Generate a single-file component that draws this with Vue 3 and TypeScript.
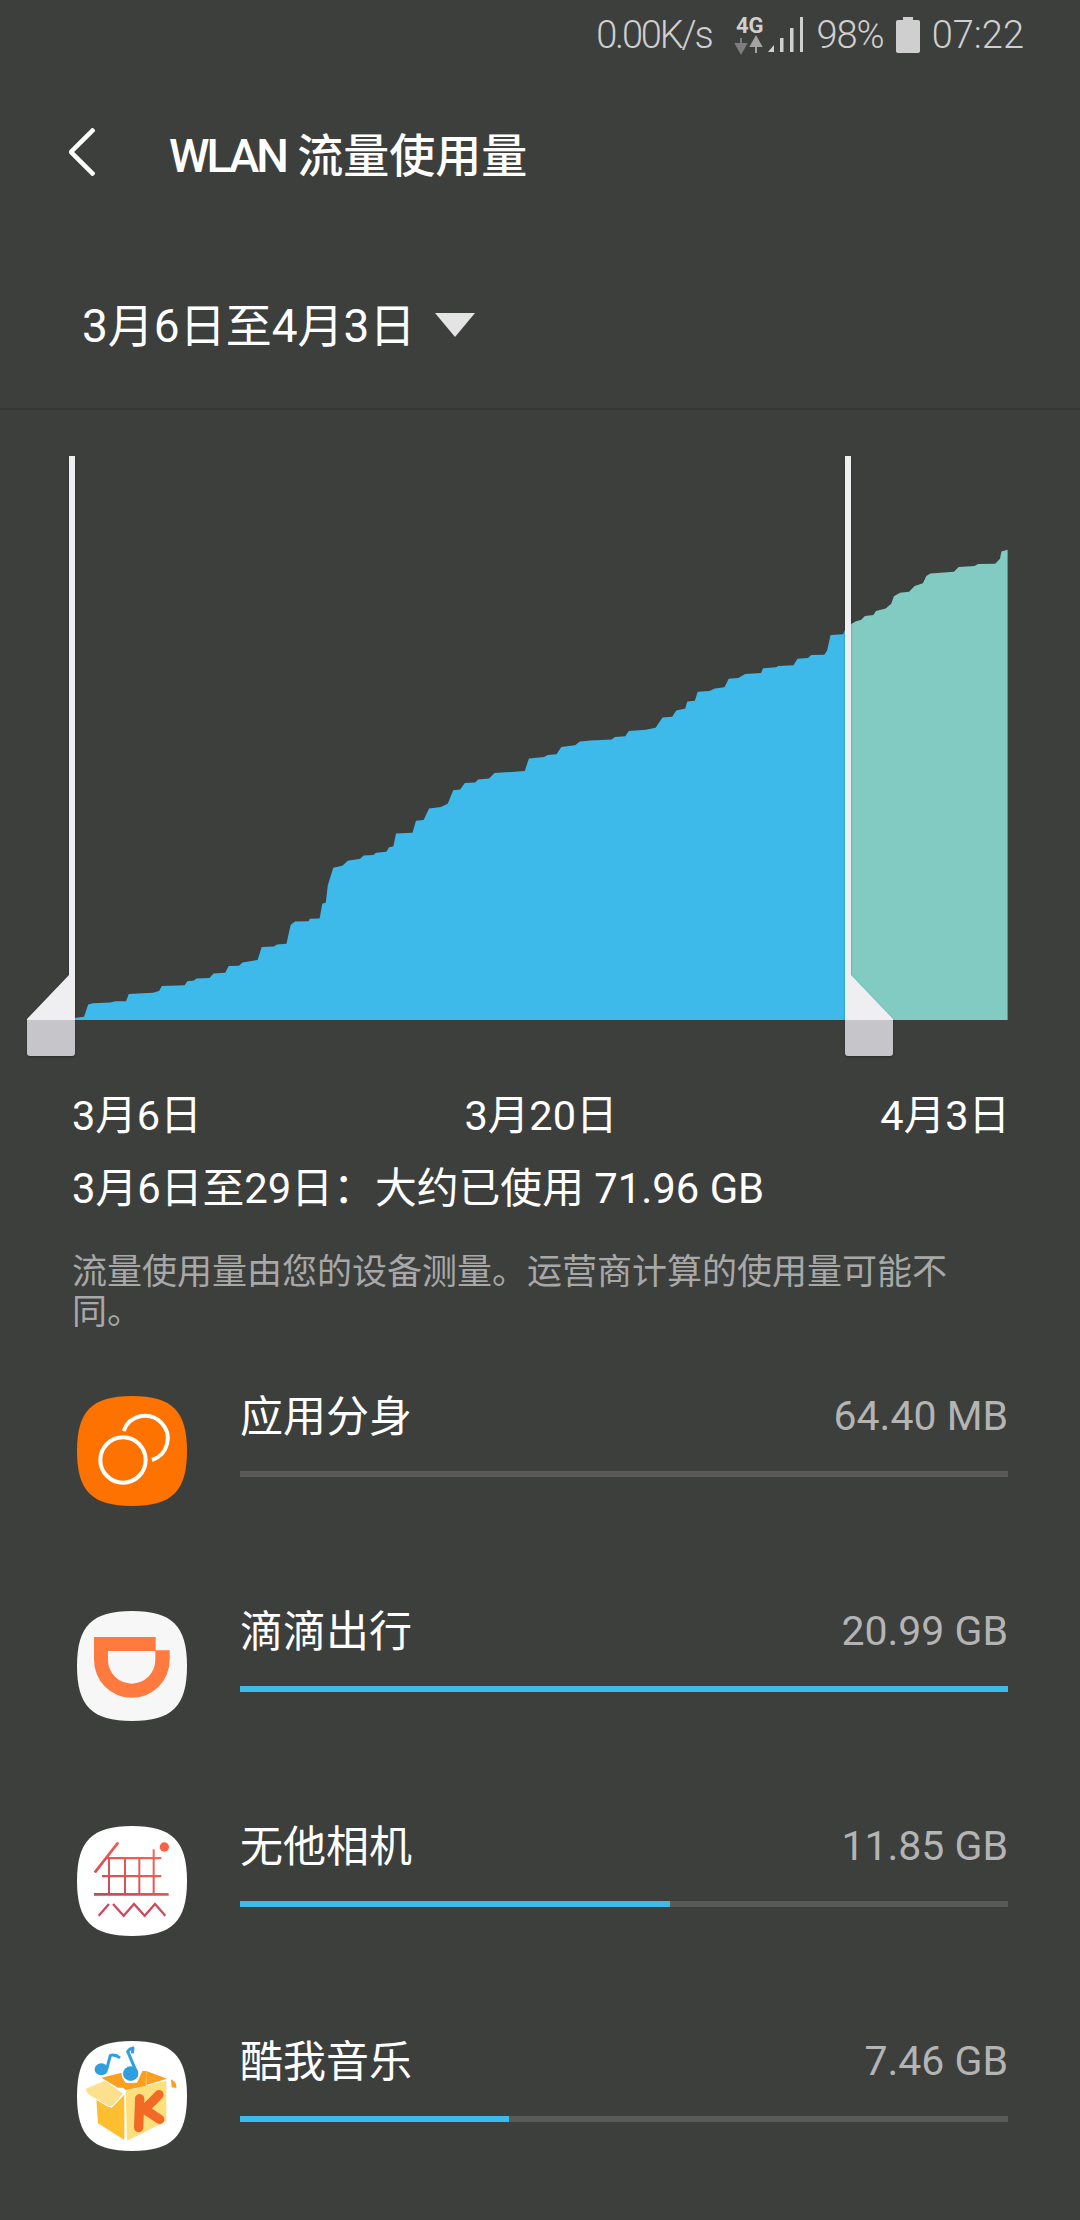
<script setup lang="ts">
interface AppRow {
  name: string
  usage: string
  percent: number
  icon: string
}

const rows: AppRow[] = [
  { name: '应用分身', usage: '64.40 MB', percent: 0, icon: 'clone' },
  { name: '滴滴出行', usage: '20.99 GB', percent: 100, icon: 'didi' },
  { name: '无他相机', usage: '11.85 GB', percent: 56, icon: 'wuta' },
  { name: '酷我音乐', usage: '7.46 GB', percent: 35, icon: 'kuwo' },
]

// traced from the chart, x scale 1.452, y scale 2.45, y origin 420
const usedPoints: [number, number][] = [
  [108, 1465], [122, 1462], [128, 1432], [135, 1429], [160, 1427], [168, 1424], [183, 1424], [187, 1406],
  [222, 1403], [231, 1399], [235, 1387], [268, 1385], [272, 1375], [282, 1373], [285, 1368], [304, 1367],
  [310, 1356], [327, 1354], [332, 1338], [347, 1337], [352, 1329], [374, 1323], [380, 1291], [398, 1290],
  [402, 1285], [416, 1283], [422, 1237], [428, 1229], [448, 1228], [450, 1222], [464, 1221], [468, 1185],
  [473, 1182], [476, 1140], [484, 1097], [497, 1092], [505, 1080], [523, 1075], [528, 1067], [542, 1066],
  [546, 1060], [561, 1058], [565, 1047], [571, 1045], [575, 1013], [599, 1011], [604, 982], [615, 980],
  [623, 952], [640, 948], [650, 940], [658, 907], [668, 905], [675, 889], [690, 888], [694, 881],
  [710, 878], [718, 865], [762, 860], [768, 829], [790, 826], [795, 821], [808, 819], [815, 801],
  [835, 797], [842, 788], [858, 785], [888, 783], [893, 777], [908, 775], [913, 762], [938, 759],
  [952, 754], [962, 729], [976, 727], [982, 712], [995, 707], [998, 690], [1009, 688], [1013, 666],
  [1030, 664], [1038, 658], [1052, 655], [1058, 634], [1072, 632], [1082, 622], [1105, 620], [1108, 608],
  [1127, 606], [1130, 603], [1152, 601], [1158, 585], [1173, 583], [1178, 576], [1197, 575], [1201, 565],
  [1206, 527], [1224, 525], [1228, 510],
]
const restPoints: [number, number][] = [
  [1228, 510], [1236, 500], [1243, 493], [1250, 490], [1256, 480], [1268, 478], [1272, 468], [1286, 462],
  [1294, 450], [1298, 432], [1307, 423], [1320, 421], [1328, 407], [1340, 400], [1345, 382], [1351, 376],
  [1385, 372], [1392, 360], [1415, 358], [1420, 353], [1445, 352], [1452, 340], [1454, 322], [1463, 318],
]

function areaPath(points: [number, number][]) {
  const mapped = points.map(([x, y]) => `${(x / 1.452).toFixed(1)} ${(420 + y / 2.45).toFixed(1)}`)
  const first = (points[0][0] / 1.452).toFixed(1)
  const last = (points[points.length - 1][0] / 1.452).toFixed(1)
  return `M${first} 1020L${mapped.join('L')}L${last} 1020Z`
}

const usedArea = areaPath(usedPoints)
const restArea = areaPath(restPoints)

const squircle = 'M165 0C285 0 330 45 330 165C330 285 285 330 165 330C45 330 0 285 0 165C0 45 45 0 165 0Z'
</script>

<template>
  <div class="page">
    <div class="status-bar">
      <span class="speed">0.00K/s</span>
      <svg class="net-icon" width="72" height="50" viewBox="730 10 72 50">
        <text x="735" y="33" class="net-label">4G</text>
        <path d="M740 38v9M735 44l5 9 5-9z" fill="#7d7d7d" stroke="#7d7d7d" stroke-width="2" />
        <path d="M755 53v-9M750 46l5-9 5 9z" fill="#a3a3a3" stroke="#a3a3a3" stroke-width="2" />
        <path d="M767 52l6-7v7zM779 38h3.500v14H779zM789 28h3.500v24H789zM799 17h3v35h-3z" fill="#cfcfcf" />
      </svg>
      <span class="battery-text">98%</span>
      <svg class="battery" width="24" height="36" viewBox="0 0 24 36">
        <path d="M7 0h10v3h5a2 2 0 0 1 2 2v29a2 2 0 0 1-2 2H2a2 2 0 0 1-2-2V5a2 2 0 0 1 2-2h5z" fill="#cfcfcf" />
      </svg>
      <span class="clock">07:22</span>
    </div>

    <header class="title-bar">
      <svg class="back" width="26" height="48" viewBox="0 0 26 48">
        <path d="M25 1L2 24l23 23" fill="none" stroke="#fff" stroke-width="4.500" />
      </svg>
      <h1><span class="wlan">WLAN</span> 流量使用量</h1>
    </header>

    <div class="cycle">
      <span>3月6日至4月3日</span>
      <svg class="caret" width="40" height="24" viewBox="0 0 40 24"><path d="M0 0h40L20 24z" fill="#e4e4e4" /></svg>
    </div>

    <svg class="chart" width="1080" height="660" viewBox="0 410 1080 660">
      <path :d="usedArea" fill="#3dbae9" />
      <path :d="restArea" fill="#81cbc3" />
      <g class="handle">
        <path d="M69 456h6v564H27v-1l42-44z" fill="#efeff2" />
        <path d="M27 1020h48v33a3 3 0 0 1-3 3H30a3 3 0 0 1-3-3z" fill="#c6c5c9" />
      </g>
      <g class="handle">
        <path d="M845 456h6v519l42 44v1h-48z" fill="#efeff2" />
        <path d="M845 1020h48v33a3 3 0 0 1-3 3h-42a3 3 0 0 1-3-3z" fill="#c6c5c9" />
      </g>
    </svg>

    <div class="axis">
      <span>3月6日</span>
      <span>3月20日</span>
      <span>4月3日</span>
    </div>
    <p class="summary">3月6日至29日：大约已使用 71.96 GB</p>
    <p class="note">流量使用量由您的设备测量。运营商计算的使用量可能不同。</p>

    <ul class="apps">
      <li v-for="row in rows" :key="row.name" class="app">
        <svg class="app-icon" width="110" height="110" viewBox="0 0 330 330">
          <template v-if="row.icon === 'clone'">
            <path :d="squircle" fill="#fe7300" />
            <g transform="translate(-82 -80)" fill="none" stroke="#fff" stroke-width="12">
              <circle cx="220" cy="272" r="68" />
              <path d="M222 185A68 68 0 1 1 307 272" />
            </g>
          </template>
          <template v-else-if="row.icon === 'didi'">
            <path :d="squircle" fill="#f7f7f7" />
            <path
              transform="translate(-82 -65)"
              fill="#fe7a3f"
              fill-rule="evenodd"
              d="M133 143H318V183H360V212A113 113 0 0 1 133 212ZM175 185V212A71 71 0 0 0 317 212V185Z"
            />
          </template>
          <template v-else-if="row.icon === 'wuta'">
            <defs>
              <linearGradient id="wuta-ink" x1="1" y1="0" x2="0" y2="1">
                <stop offset="0" stop-color="#ff6f4b" />
                <stop offset="1" stop-color="#c7435f" />
              </linearGradient>
            </defs>
            <path :d="squircle" fill="#fff" />
            <g transform="translate(-82 -80)">
              <path
                fill="url(#wuta-ink)"
                d="M202 127l7 5-70 90-7-5zM170 173h165v7H170zM157 227h178v7H157zM133 281h224v8H133zM175 177h6v106h-6zM223 177h6v106h-6zM266 177h6v106h-6zM309 150h6v133h-6z"
              />
              <path
                d="M178 314L147 349M190 314L222 349L253 314L285 349L316 314L347 349"
                fill="none"
                stroke="#cc4a5e"
                stroke-width="7"
              />
              <circle cx="344" cy="143" r="14" fill="#fb6045" />
            </g>
          </template>
          <template v-else>
            <path :d="squircle" fill="#fff" />
            <g transform="translate(-82 -65)">
              <path d="M155 175L216 160L232 205L205 205z" fill="#fc9f1e" />
              <path d="M290 155L352 178L290 197z" fill="#fc9f1e" />
              <path d="M364 180C376 186 382 196 380 206L366 204z" fill="#fc9f1e" />
              <path d="M140 240L186 265L224 226V362L145 312z" fill="#fdbf30" />
              <path d="M228 214L350 184V306L232 364z" fill="#fedf7d" />
              <path
                d="M108 207L165 183L222 222L192 258Q184 266 174 260L116 226Q106 216 108 207z"
                fill="#fde08d"
                stroke="#fff"
                stroke-width="3"
              />
              <path
                d="M270 238L267 325M328 226L285 270L330 300"
                fill="none"
                stroke="#f26a25"
                stroke-width="28"
                stroke-linecap="round"
                stroke-linejoin="round"
              />
              <path d="M205 190L262 190L278 155L290 155L288 200L228 212z" fill="#fc9f1e" />
              <ellipse cx="243" cy="165" rx="27" ry="26" fill="#fff" />
              <ellipse cx="243" cy="163" rx="23" ry="22" fill="#2f9fe0" />
              <ellipse cx="155" cy="150" rx="20" ry="18" fill="#2f9fe0" />
              <path
                d="M261 160L234 96Q240 88 250 86L248 102M171 150L182 108Q198 104 211 116"
                fill="none"
                stroke="#2f9fe0"
                stroke-width="9"
                stroke-linejoin="round"
              />
            </g>
          </template>
        </svg>
        <div class="app-body">
          <div class="app-line">
            <span class="app-name">{{ row.name }}</span>
            <span class="app-usage">{{ row.usage }}</span>
          </div>
          <div class="track">
            <div class="fill" :style="{ width: row.percent + '%' }"></div>
          </div>
        </div>
      </li>
    </ul>
  </div>
</template>

<style>
html,
body {
  margin: 0;
  background: #3d3f3d;
}
</style>

<style scoped>
.page {
  width: 1080px;
  height: 2220px;
  overflow: hidden;
  background: #3d3f3d;
  color: #fff;
  font-family: Roboto, "Noto Sans CJK SC", sans-serif;
}

.status-bar {
  height: 70px;
  display: flex;
  align-items: center;
  justify-content: flex-end;
  padding-right: 56px;
  color: #cfcfcf;
  font-size: 38px;
  font-weight: 300;
}

.speed {
  margin-right: 20px;
  letter-spacing: -2.2px;
}

.net-icon {
  margin-right: 13px;
}

.net-label {
  font-family: Roboto, sans-serif;
  font-size: 22px;
  font-weight: 700;
  fill: #cfcfcf;
}

.battery-text {
  letter-spacing: -1px;
}

.battery {
  margin: 0 12px;
}

.title-bar {
  height: 166px;
  box-sizing: border-box;
  padding: 0 0 2px 69px;
  display: flex;
  align-items: center;
}

.back {
  margin-right: 74px;
}

.title-bar h1 {
  margin: 0;
  font-size: 46px;
  font-weight: 500;
}

.wlan {
  letter-spacing: -3px;
}

.cycle {
  height: 172px;
  display: flex;
  align-items: center;
  gap: 20px;
  padding-left: 82px;
  font-size: 46px;
  border-bottom: 2px solid #363836;
}

.caret {
  margin-top: 5px;
}

.chart {
  display: block;
}

.handle {
  filter: drop-shadow(0 1px 1px rgba(0, 0, 0, 0.3));
}

.axis {
  display: flex;
  justify-content: space-between;
  margin-top: 21px;
  padding: 0 70px 0 72px;
  font-size: 41.5px;
  line-height: 50px;
}

.summary {
  margin: 23px 0 0;
  padding: 0 72px;
  font-size: 41.8px;
  line-height: 50px;
}

.note {
  margin: 39px 0 0;
  padding: 0 72px;
  color: #a8a8a8;
  font-size: 35px;
  line-height: 40px;
}

.apps {
  list-style: none;
  margin: 10px 0 0;
  padding: 0;
}

.app {
  height: 215px;
  box-sizing: border-box;
  display: flex;
  align-items: flex-start;
  gap: 53px;
  padding: 45px 72px 0 77px;
}

.app-icon {
  flex: none;
  margin-top: 8px;
}

.app-body {
  flex: 1;
}

.app-line {
  display: flex;
  justify-content: space-between;
  align-items: center;
  height: 50px;
  margin-bottom: 33px;
}

.app-name {
  font-size: 43px;
}

.app-usage {
  margin-top: 5px;
  color: #b4b4b4;
  font-size: 41px;
}

.track {
  height: 6px;
  background: #5a5b59;
}

.fill {
  height: 100%;
  background: #3dbae9;
}
</style>
